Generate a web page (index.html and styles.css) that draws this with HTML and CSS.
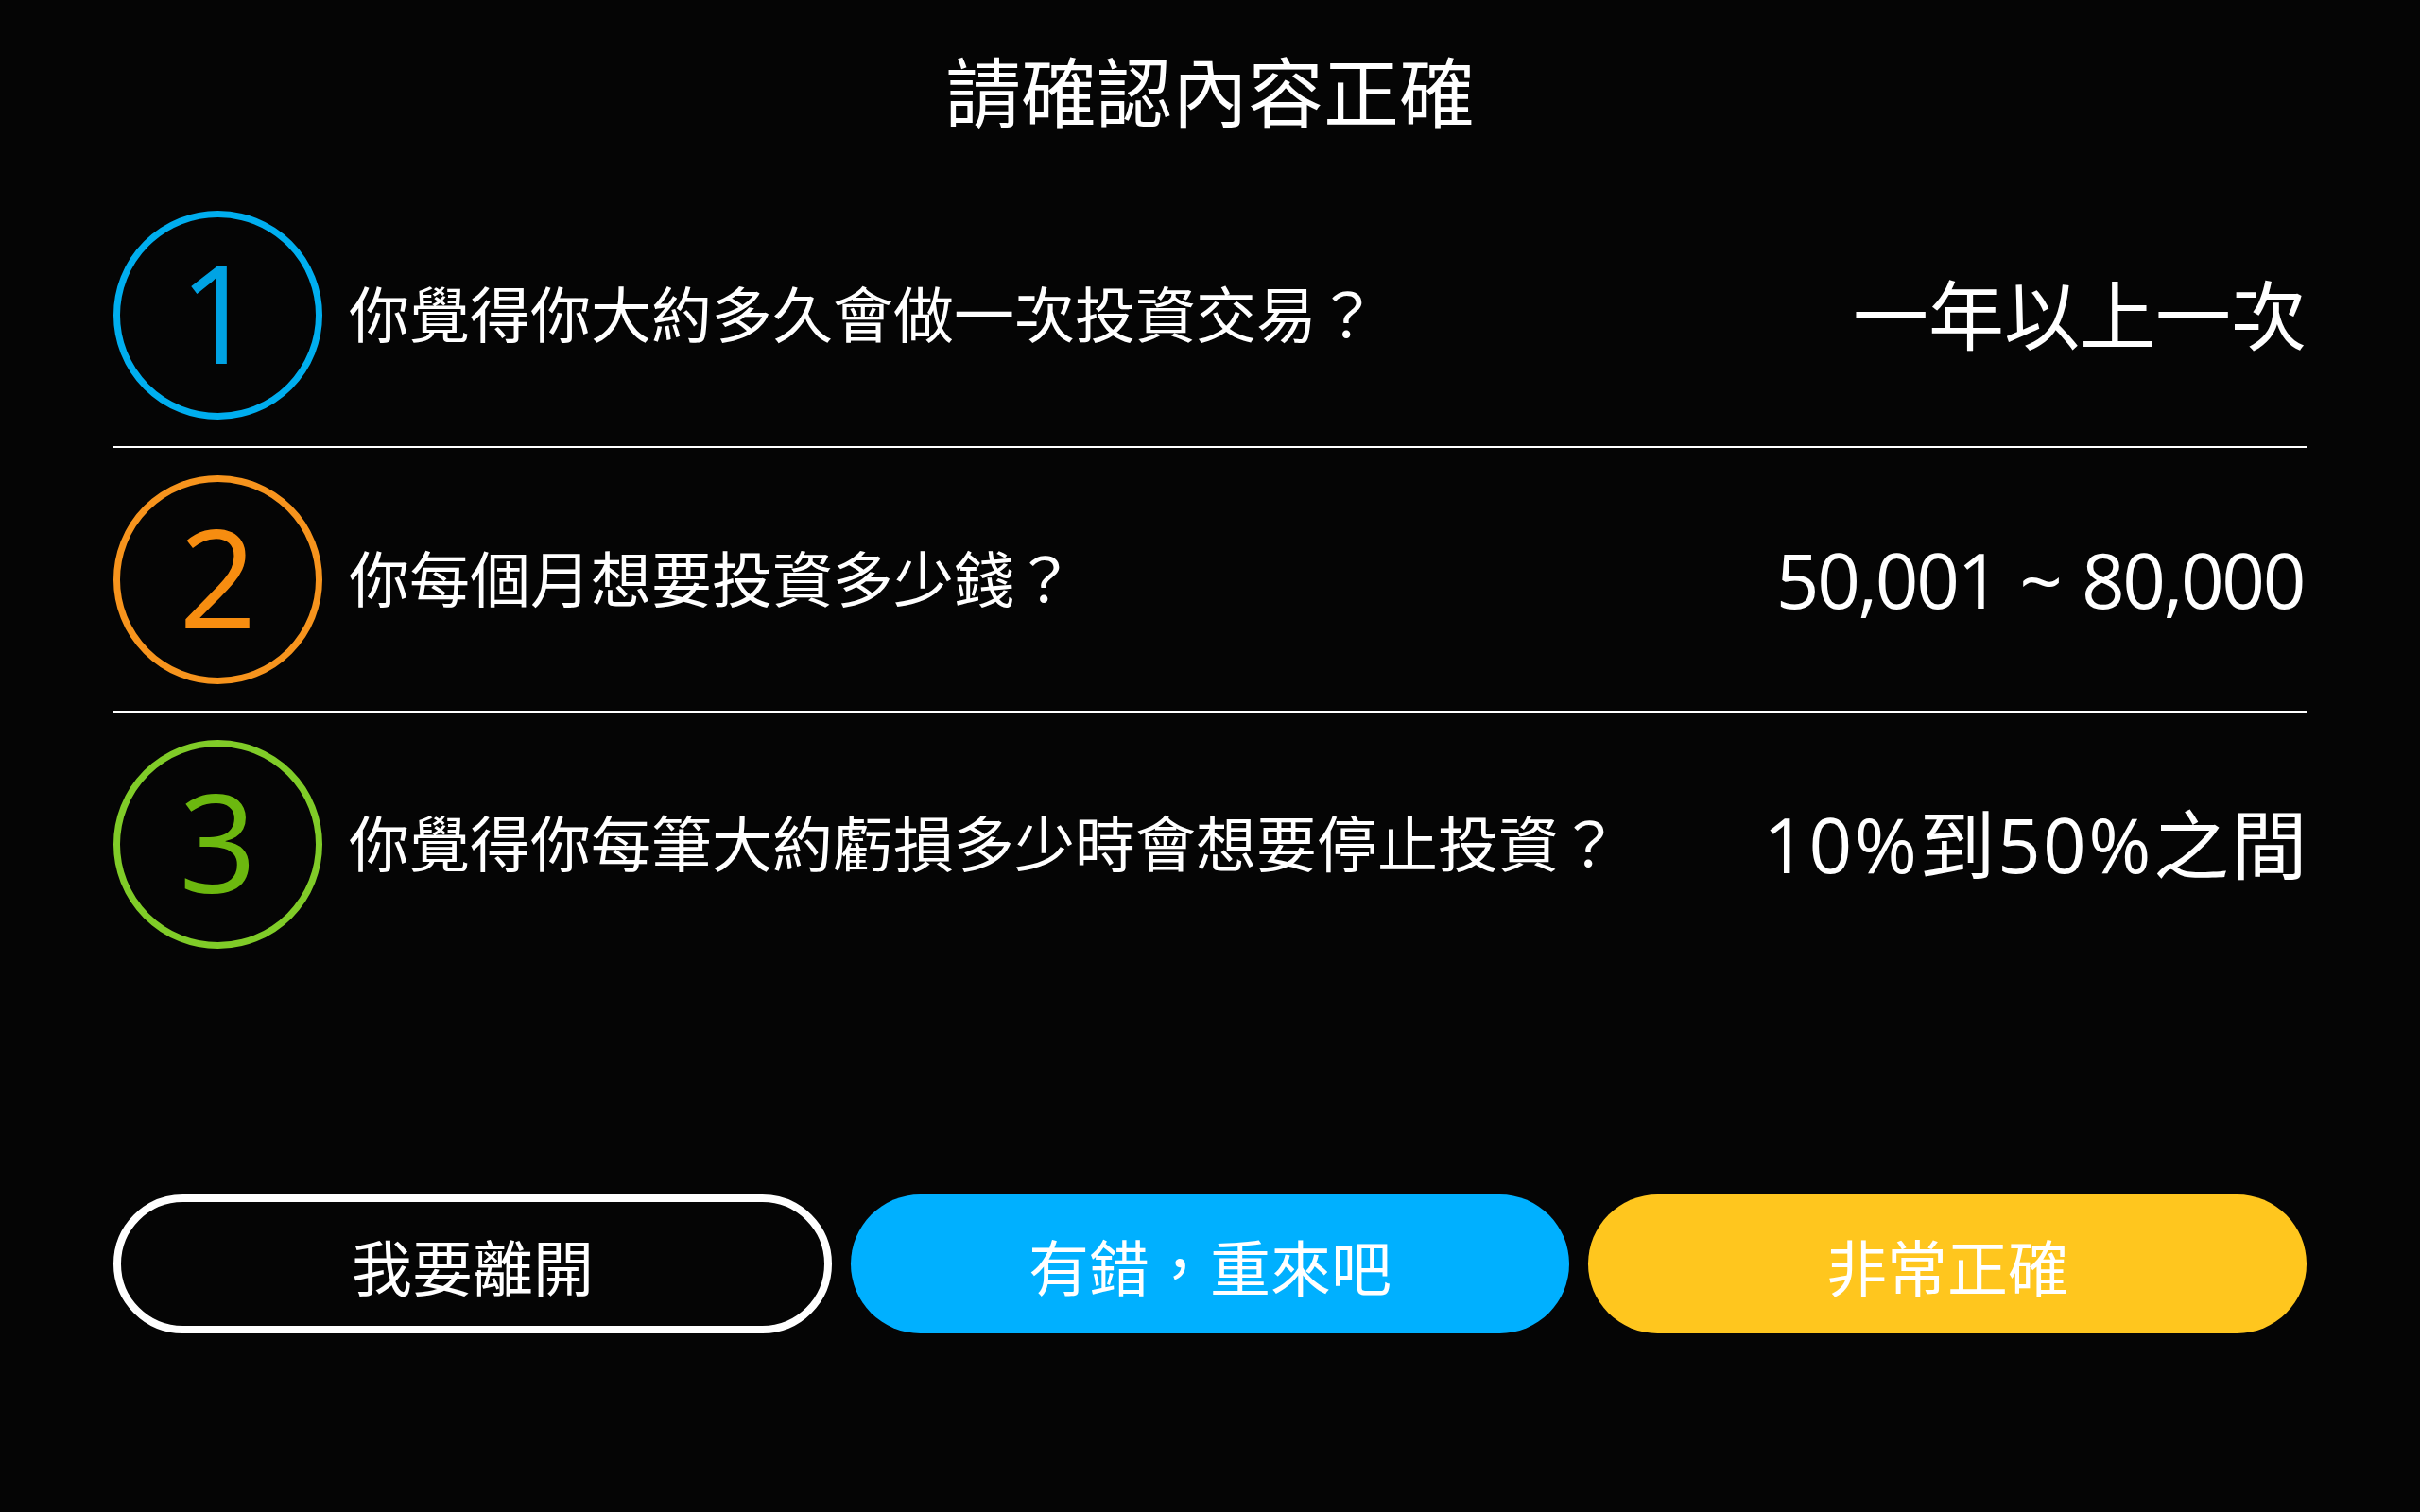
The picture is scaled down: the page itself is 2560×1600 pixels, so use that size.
FILE: index.html
```html
<!DOCTYPE html>
<html lang="zh-Hant">
<head>
<meta charset="utf-8">
<title>請確認內容正確</title>
<link rel="stylesheet" href="styles.css">
</head>
<body>
<main class="page">
  <h1 class="title">請確認內容正確</h1>
  <section class="list">
    <div class="row">
      <div class="badge badge-blue"><span>1</span></div>
      <div class="question">你覺得你大約多久會做一次投資交易？</div>
      <div class="answer">一年以上一次</div>
    </div>
    <div class="row">
      <div class="badge badge-orange"><span>2</span></div>
      <div class="question">你每個月想要投資多少錢？</div>
      <div class="answer answer-tight">50,001 ~ 80,000</div>
    </div>
    <div class="row">
      <div class="badge badge-green"><span>3</span></div>
      <div class="question">你覺得你每筆大約虧損多少時會想要停止投資？</div>
      <div class="answer answer-wide">10%到50%之間</div>
    </div>
  </section>
  <div class="actions">
    <button class="btn btn-outline">我要離開</button>
    <button class="btn btn-blue">有錯，重來吧</button>
    <button class="btn btn-yellow">非常正確</button>
  </div>
</main>
</body>
</html>
```

FILE: styles.css
```css
html, body {
  margin: 0;
  padding: 0;
  background: #050505;
}

body {
  width: 2560px;
  height: 1600px;
  color: #ffffff;
  font-family: "Open Sans", "Noto Sans CJK TC", sans-serif;
}

.page {
  padding: 0 120px;
  display: flex;
  flex-direction: column;
}

.title {
  margin: 0;
  padding-top: 33px;
  height: 120px;
  line-height: 120px;
  text-align: center;
  font-family: "Noto Sans CJK TC", sans-serif;
  font-size: 80px;
  font-weight: 400;
}

.list {
  margin-top: 41px;
  display: flex;
  flex-direction: column;
}

.row {
  height: 278px;
  display: flex;
  align-items: center;
  border-bottom: 2px solid #ffffff;
}

.row:last-child {
  border-bottom: none;
}

.badge {
  width: 221px;
  height: 221px;
  box-sizing: border-box;
  border-radius: 50%;
  border: 7px solid;
  display: flex;
  align-items: center;
  justify-content: center;
  padding-bottom: 8px;
  flex: none;
  font-family: "Open Sans", sans-serif;
  font-size: 144px;
  line-height: 1;
}

.badge-blue { border-color: #00aeef; color: #00a3e4; }
.badge-orange { border-color: #f7941d; color: #f78d10; }
.badge-green { border-color: #80cc28; color: #6cb80f; }

.question {
  margin-left: 28px;
  font-size: 64px;
  line-height: 1.2;
  flex: 1;
}

.answer {
  font-size: 80px;
  line-height: 1.2;
  text-align: right;
  white-space: nowrap;
}

.answer-tight {
  letter-spacing: -2.4px;
  word-spacing: 4px;
  margin-right: 3px;
}

.answer-wide {
  letter-spacing: 2.5px;
  margin-right: -3px;
}

.actions {
  margin-top: 232px;
  display: flex;
  gap: 20px;
}

.btn {
  width: 760px;
  flex: none;
  height: 147px;
  box-sizing: border-box;
  border-radius: 74px;
  border: none;
  padding: 0;
  color: #ffffff;
  font-family: "Noto Sans CJK TC", sans-serif;
  font-size: 64px;
  line-height: 1;
  display: flex;
  align-items: center;
  justify-content: center;
}

.btn-outline {
  background: #050505;
  border: 8px solid #ffffff;
}

.btn-blue {
  background: #00b0ff;
}

.btn-yellow {
  background: #ffc61e;
}
```
